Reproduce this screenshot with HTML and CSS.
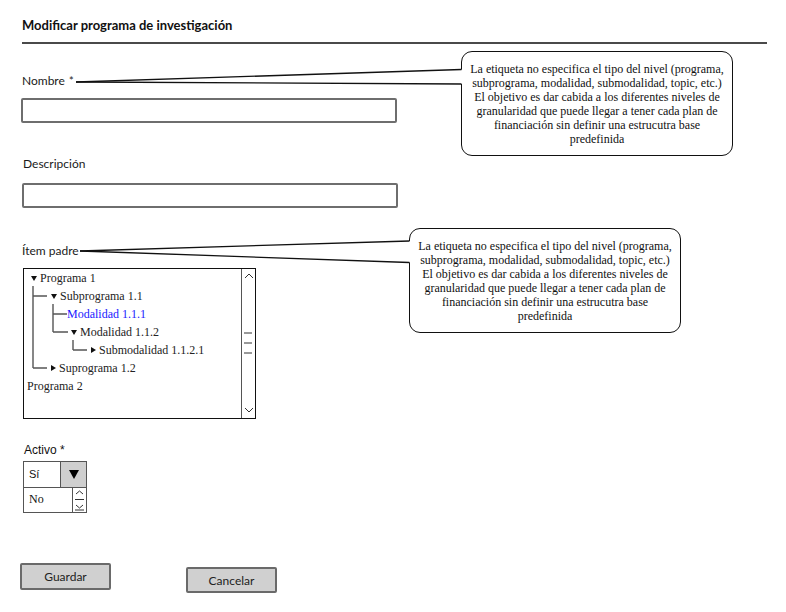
FILE: index.html
```html
<!DOCTYPE html>
<html lang="es">
<head>
<meta charset="utf-8">
<title>Modificar programa de investigación</title>
<link rel="stylesheet" href="styles.css">
</head>
<body>
<div class="page">
  <div class="form">
    <h1 class="title">Modificar programa de investigación</h1>
    <div class="rule"></div>

    <div class="label label-nombre">Nombre <span class="req">*</span></div>
    <div class="input input-nombre"></div>

    <div class="label label-desc">Descripción</div>
    <div class="input input-desc"></div>

    <div class="label label-item">Ítem padre</div>
    <div class="tree">
      <div class="tree-items">
        <svg class="connectors" width="80" height="110" viewBox="0 0 80 110">
          <g stroke="#555" stroke-width="1.4" fill="none">
            <path d="M9 17 V99 M9 27 H23 M9 99 H23"/>
            <path d="M29 35 V63 M29 45 H43 M29 63 H44"/>
            <path d="M49 71 V81 M49 81 H63"/>
          </g>
        </svg>
        <div class="row r0"><span class="tri-down"></span>Programa 1</div>
        <div class="row r1"><span class="tri-down"></span>Subprograma 1.1</div>
        <div class="row r2 selected">Modalidad 1.1.1</div>
        <div class="row r3"><span class="tri-down"></span>Modalidad 1.1.2</div>
        <div class="row r4"><span class="tri-right"></span>Submodalidad 1.1.2.1</div>
        <div class="row r1b"><span class="tri-right"></span>Suprograma 1.2</div>
        <div class="row rtop">Programa 2</div>
      </div>
      <div class="scroll">
        <svg width="14" height="149" viewBox="0 0 14 149">
          <g stroke="#333" stroke-width="1" fill="none">
            <polyline points="3,9 7,5 11,9"/>
            <polyline points="3,139 7,143 11,139"/>
            <path d="M2 64 H10 M2 74 H10 M2 84 H10"/>
          </g>
        </svg>
      </div>
    </div>

    <div class="label label-activo">Activo *</div>
    <div class="combo">
      <div class="combo-top">
        <div class="combo-value">Sí</div>
        <div class="combo-btn"><span class="tri-big"></span></div>
      </div>
      <div class="combo-list">
        <div class="combo-opt">No</div>
        <div class="mini-scroll">
          <svg width="13" height="24" viewBox="0 0 13 24">
            <g stroke="#333" stroke-width="1" fill="none">
              <polyline points="3,6 6.5,3 10,6"/>
              <path d="M2 11.5 H11"/>
              <polyline points="3,17 6.5,20 10,17"/>
              <path d="M2 22 H11"/>
            </g>
          </svg>
        </div>
      </div>
    </div>

    <div class="buttons">
      <div class="btn btn-save">Guardar</div>
      <div class="btn btn-cancel">Cancelar</div>
    </div>
  </div>

  <div class="callout callout-1">La etiqueta no especifica el tipo del nivel (programa, subprograma, modalidad, submodalidad, topic, etc.) El objetivo es dar cabida a los diferentes niveles de granularidad que puede llegar a tener cada plan de financiación sin definir una estrucutra base predefinida</div>
  <div class="callout callout-2">La etiqueta no especifica el tipo del nivel (programa, subprograma, modalidad, submodalidad, topic, etc.) El objetivo es dar cabida a los diferentes niveles de granularidad que puede llegar a tener cada plan de financiación sin definir una estrucutra base predefinida</div>

  <svg class="tails" width="786" height="612" viewBox="0 0 786 612">
    <polygon points="76,82 462,69.5 462,84" fill="#fff"/>
    <polygon points="80,251 410,241 410,262.5" fill="#fff"/>
    <g stroke="#111" stroke-width="1.3" fill="none">
      <line x1="76" y1="82" x2="461.5" y2="69.5"/>
      <line x1="76" y1="82" x2="461.5" y2="84"/>
      <line x1="80" y1="251" x2="409.5" y2="241"/>
      <line x1="80" y1="251" x2="409.5" y2="262.5"/>
    </g>
  </svg>
</div>
</body>
</html>
```

FILE: styles.css
```css
* { box-sizing: border-box; }

html, body {
  margin: 0;
  padding: 0;
  background: #fff;
}

.page {
  position: relative;
  width: 786px;
  height: 612px;
  overflow: hidden;
  font-family: Lato, "Liberation Sans", sans-serif;
  color: #1a1a1a;
}

.form {
  padding: 17px 19px 0 22px;
  display: flex;
  flex-direction: column;
  align-items: flex-start;
}

.title {
  margin: 0;
  font-size: 13px;
  line-height: 16px;
  font-weight: 700;
  color: #111;
}

.rule {
  margin-top: 9px;
  width: 745px;
  height: 2px;
  background: #4a4a4a;
}

.label {
  font-size: 12px;
  line-height: 16px;
}

.req {
  font-size: 11px;
  margin-left: 1px;
}

.label-nombre { margin-top: 29px; }

.input {
  width: 376px;
  height: 25px;
  border: 2px solid #6e6e6e;
  border-radius: 2px;
  background: #fff;
}

.input-nombre { margin-top: 9px; margin-left: -1px; }

.label-desc { margin-top: 33px; margin-left: 1px; }
.input-desc { margin-top: 11px; }

.label-item { margin-top: 35px; }

.tree {
  margin-top: 9px;
  margin-left: 1px;
  width: 233px;
  height: 151px;
  border: 1px solid #111;
  display: flex;
  background: #fff;
}

.tree-items {
  position: relative;
  flex: 1;
  font-family: "Liberation Serif", serif;
  font-size: 12px;
  color: #222;
}

.connectors {
  position: absolute;
  left: 0;
  top: 0;
}

.row {
  height: 18px;
  line-height: 18px;
  display: flex;
  align-items: center;
  white-space: nowrap;
}

.r0 { padding-left: 7px; }
.r1 { padding-left: 27px; }
.r2 { padding-left: 43px; }
.r3 { padding-left: 47px; }
.r4 { padding-left: 67px; }
.r1b { padding-left: 27px; }
.rtop { padding-left: 3px; }

.selected { color: #1a1aff; }

.tri-down {
  width: 0;
  height: 0;
  border-left: 3px solid transparent;
  border-right: 3px solid transparent;
  border-top: 5px solid #111;
  margin-right: 3px;
}

.tri-right {
  width: 0;
  height: 0;
  border-top: 3px solid transparent;
  border-bottom: 3px solid transparent;
  border-left: 5px solid #111;
  margin-right: 3px;
}

.scroll {
  width: 14px;
  border-left: 1px solid #555;
  flex: none;
}

.scroll svg { display: block; }

.label-activo {
  margin-top: 23px;
  margin-left: 2px;
  font-family: "Liberation Sans", sans-serif;
  color: #111;
}

.combo {
  margin-top: 3px;
  margin-left: 1px;
  width: 64px;
  display: flex;
  flex-direction: column;
}

.combo-top {
  display: flex;
  height: 27px;
  border: 1px solid #555;
}

.combo-value {
  flex: 1;
  font-family: "Liberation Sans", sans-serif;
  font-size: 11px;
  line-height: 25px;
  padding-left: 5px;
  color: #111;
}

.combo-btn {
  width: 26px;
  background: #cfcfcf;
  border-left: 1px solid #555;
  display: flex;
  align-items: center;
  justify-content: center;
}

.tri-big {
  width: 0;
  height: 0;
  border-left: 5px solid transparent;
  border-right: 5px solid transparent;
  border-top: 9px solid #000;
}

.combo-list {
  display: flex;
  height: 25px;
  border: 1px solid #555;
  border-top: none;
}

.combo-opt {
  flex: 1;
  font-family: "Liberation Serif", serif;
  font-size: 12px;
  line-height: 22px;
  padding-left: 5px;
  color: #111;
}

.mini-scroll {
  width: 14px;
  border-left: 1px solid #555;
  background: #fff;
}

.mini-scroll svg { display: block; }

.buttons {
  margin-top: 50px;
  margin-left: -2px;
  display: flex;
  align-items: flex-start;
  gap: 75px;
}

.btn {
  width: 91px;
  height: 27px;
  background: #d0d0d0;
  border: 2px solid #6a6a6a;
  border-radius: 2px;
  font-size: 12px;
  line-height: 23px;
  text-align: center;
  color: #222;
}

.btn-cancel {
  margin-top: 4px;
  height: 26px;
}

.callout {
  position: absolute;
  width: 272px;
  height: 105px;
  border: 1.3px solid #111;
  border-radius: 11px;
  background: #fff;
  font-family: "Liberation Serif", serif;
  font-size: 12px;
  line-height: 14px;
  text-align: center;
  color: #111;
  padding: 10px 6px 0 6px;
}

.callout-1 { left: 461px; top: 51px; }
.callout-2 { left: 409px; top: 228px; }

.tails {
  position: absolute;
  left: 0;
  top: 0;
  pointer-events: none;
}
```
